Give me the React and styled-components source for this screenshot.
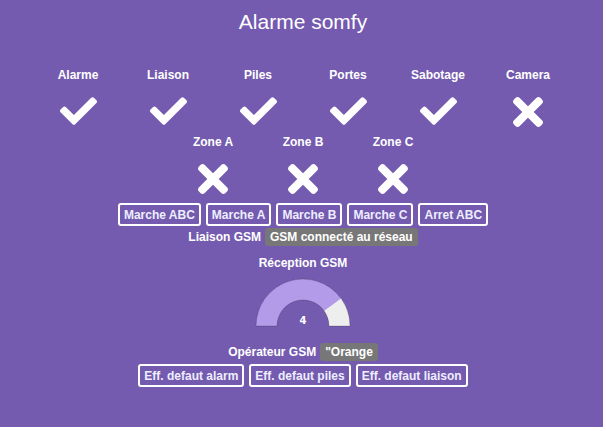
import React from "react";
import styled, { createGlobalStyle } from "styled-components";

const GlobalStyle = createGlobalStyle`
  html, body {
    margin: 0;
    padding: 0;
    background: #ffffff;
    font-family: "Liberation Sans", Arial, sans-serif;
  }
`;

const Panel = styled.div`
  box-sizing: border-box;
  width: 603px;
  height: 427px;
  padding-left: 3px;
  background: #745bb0;
  color: #ffffff;
  display: flex;
  flex-direction: column;
  align-items: center;
`;

const Title = styled.h1`
  margin: 10px 0 0;
  font-size: 21px;
  line-height: 24px;
  font-weight: normal;
`;

const StatusGrid = styled.div`
  display: grid;
  grid-template-columns: repeat(${(p) => p.$cols}, 90px);
  margin-top: ${(p) => p.$top}px;
`;

const StatusCell = styled.div`
  display: flex;
  flex-direction: column;
  align-items: center;
`;

const Label = styled.span`
  font-size: 12px;
  font-weight: bold;
  line-height: 16px;
  white-space: nowrap;
`;

const IconBox = styled.div`
  height: 30px;
  margin-top: 13px;
  display: flex;
  align-items: center;
  justify-content: center;
`;

const ButtonRow = styled.div`
  display: flex;
  gap: 5px;
  margin-top: ${(p) => p.$top}px;
`;

const Button = styled.button`
  height: 23px;
  padding: 0 4px;
  background: transparent;
  border: 2px solid #ffffff;
  border-radius: 3px;
  color: #eeeeff;
  font-family: "Liberation Sans", Arial, sans-serif;
  font-size: 12px;
  font-weight: bold;
  cursor: pointer;
`;

const InfoRow = styled.div`
  display: flex;
  align-items: center;
  gap: 4px;
  margin-top: ${(p) => p.$top}px;
`;

const Badge = styled.span`
  height: 18px;
  line-height: 18px;
  padding: 0 5px;
  background: #777777;
  border-radius: 3px;
  font-size: 12px;
  font-weight: bold;
  white-space: nowrap;
`;

const GaugeTitle = styled(Label)`
  margin-top: 9px;
`;

const GaugeSvg = styled.svg`
  display: block;
  margin-top: 7px;
`;

function CheckIcon() {
  return (
    <svg width="37" height="28" viewBox="0 64 512 384">
      <path
        fill="#fff"
        d="M173.898 439.404l-166.4-166.4c-9.997-9.997-9.997-26.206 0-36.204l36.203-36.204c9.997-9.998 26.207-9.998 36.204 0L192 312.69 432.095 72.596c9.997-9.997 26.207-9.997 36.204 0l36.203 36.204c9.997 9.997 9.997 26.206 0 36.204l-294.4 294.401c-9.998 9.997-26.207 9.997-36.204-.001z"
      />
    </svg>
  );
}

function TimesIcon() {
  return (
    <svg width="30" height="30" viewBox="0 80 352 352" style={{ marginTop: 2 }}>
      <path
        fill="#fff"
        d="M242.72 256l100.07-100.07c12.280-12.28 12.28-32.19 0-44.48l-22.24-22.24c-12.28-12.28-32.19-12.28-44.48 0L176 189.28 75.93 89.21c-12.28-12.28-32.19-12.28-44.48 0L9.21 111.45c-12.28 12.28-12.28 32.19 0 44.48L109.28 256 9.21 356.07c-12.28 12.28-12.28 32.19 0 44.48l22.24 22.24c12.28 12.28 32.2 12.28 44.48 0L176 322.72l100.07 100.07c12.28 12.28 32.2 12.28 44.48 0l22.24-22.24c12.28-12.28 12.28-32.19 0-44.48L242.72 256z"
      />
    </svg>
  );
}

function Status({ label, ok }) {
  return (
    <StatusCell>
      <Label>{label}</Label>
      <IconBox>{ok ? <CheckIcon /> : <TimesIcon />}</IconBox>
    </StatusCell>
  );
}

function Gauge({ value, max }) {
  const cx = 48;
  const cy = 48;
  const R = 47;
  const r = 26;
  const t = Math.PI * (1 - value / max);
  const ox = cx + R * Math.cos(t);
  const oy = cy - R * Math.sin(t);
  const ix = cx + r * Math.cos(t);
  const iy = cy - r * Math.sin(t);
  const filled = `M ${cx - R} ${cy} A ${R} ${R} 0 0 1 ${ox} ${oy} L ${ix} ${iy} A ${r} ${r} 0 0 0 ${cx - r} ${cy} Z`;
  const rest = `M ${ox} ${oy} A ${R} ${R} 0 0 1 ${cx + R} ${cy} L ${cx + r} ${cy} A ${r} ${r} 0 0 0 ${ix} ${iy} Z`;
  const outline = `M ${cx - R} ${cy} A ${R} ${R} 0 0 1 ${cx + R} ${cy} L ${cx + r} ${cy} A ${r} ${r} 0 0 0 ${cx - r} ${cy} Z`;
  return (
    <GaugeSvg width="97" height="49" viewBox="0 0 97 49">
      <path d={filled} fill="#b39be9" />
      <path d={rest} fill="#eeeeee" />
      <path d={outline} fill="none" stroke="rgba(0,0,0,0.18)" strokeWidth="1" />
      <text
        x={cx}
        y="46"
        textAnchor="middle"
        fill="#fff"
        fontFamily="Verdana, 'DejaVu Sans', sans-serif"
        fontWeight="bold"
        fontSize="10"
      >
        {value}
      </text>
    </GaugeSvg>
  );
}

const devices = [
  { label: "Alarme", ok: true },
  { label: "Liaison", ok: true },
  { label: "Piles", ok: true },
  { label: "Portes", ok: true },
  { label: "Sabotage", ok: true },
  { label: "Camera", ok: false },
];

const zones = [
  { label: "Zone A", ok: false },
  { label: "Zone B", ok: false },
  { label: "Zone C", ok: false },
];

export default function App() {
  return (
    <>
      <GlobalStyle />
      <Panel>
        <Title>Alarme somfy</Title>
        <StatusGrid $cols={devices.length} $top={33}>
          {devices.map((d) => (
            <Status key={d.label} {...d} />
          ))}
        </StatusGrid>
        <StatusGrid $cols={zones.length} $top={8}>
          {zones.map((z) => (
            <Status key={z.label} {...z} />
          ))}
        </StatusGrid>
        <ButtonRow $top={10}>
          <Button>Marche ABC</Button>
          <Button>Marche A</Button>
          <Button>Marche B</Button>
          <Button>Marche C</Button>
          <Button>Arret ABC</Button>
        </ButtonRow>
        <InfoRow $top={2}>
          <Label>Liaison GSM</Label>
          <Badge>GSM connecté au réseau</Badge>
        </InfoRow>
        <GaugeTitle>Réception GSM</GaugeTitle>
        <Gauge value={4} max={5} />
        <InfoRow $top={16}>
          <Label>Opérateur GSM</Label>
          <Badge>"Orange</Badge>
        </InfoRow>
        <ButtonRow $top={3}>
          <Button>Eff. defaut alarm</Button>
          <Button>Eff. defaut piles</Button>
          <Button>Eff. defaut liaison</Button>
        </ButtonRow>
      </Panel>
    </>
  );
}
